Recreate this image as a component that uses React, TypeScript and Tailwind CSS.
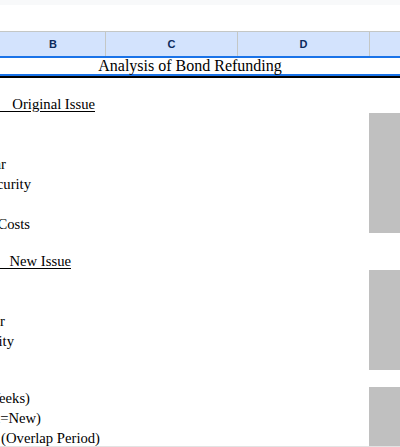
const serif = "font-['Liberation_Serif','Times_New_Roman',serif]";

type Row = {
  h: string;
  label?: string;
  end?: string;
  underline?: boolean;
  shaded?: boolean;
};

const rows: Row[] = [
  { h: "h-[15px]" },
  { h: "h-[20px]", label: "Data on\u00a0\u00a0\u00a0\u00a0Original Issue", end: "w-[95px]", underline: true },
  { h: "h-[20px]", shaded: true },
  { h: "h-[20px]", shaded: true },
  { h: "h-[20px]", label: "Coupon Payments per Year", end: "w-[6px]", shaded: true },
  { h: "h-[20px]", label: "Years Remaining on Security", end: "w-[31px]", shaded: true },
  { h: "h-[20px]", shaded: true },
  { h: "h-[20px]", label: "Flotation Costs", end: "w-[30px]", shaded: true },
  { h: "h-[17px]" },
  { h: "h-[20px]", label: "Data on\u00a0\u00a0\u00a0\u00a0New Issue", end: "w-[71px]", underline: true },
  { h: "h-[20px]", shaded: true },
  { h: "h-[20px]", shaded: true },
  { h: "h-[20px]", label: "Coupon Payments per Year", end: "w-[5px]", shaded: true },
  { h: "h-[20px]", label: "Years to Maturity", end: "w-[14px]", shaded: true },
  { h: "h-[20px]", shaded: true },
  { h: "h-[17px]" },
  { h: "h-[20px]", label: "Overlap Period (Weeks)", end: "w-[30px]", shaded: true },
  { h: "h-[20px]", label: "Tax Rate (Old=New)", end: "w-[41px]", shaded: true },
  { h: "h-[19px]", label: "Short-term Interest Rate (Overlap Period)", end: "w-[100px]", shaded: true },
];

function HeaderCell({ letter, w }: { letter: string; w: string }) {
  return (
    <div
      className={`${w} flex shrink-0 items-center justify-center border-r border-[#c4c7c5] text-[11px] font-bold text-[#0b2a5c] font-['Liberation_Sans',Arial,sans-serif]`}
    >
      {letter}
    </div>
  );
}

export default function App() {
  return (
    <div className="flex h-[447px] w-[400px] flex-col overflow-hidden bg-white">
      <div className="h-[5px] shrink-0 bg-[#f8f9fa]" />
      <div className="h-[26px] shrink-0 bg-white" />

      {/* column header */}
      <div className="flex h-[25px] shrink-0 border-t border-[#c4c7c5] bg-[#d3e3fd]">
        <HeaderCell letter="B" w="w-[106px] pl-[1px]" />
        <HeaderCell letter="C" w="w-[132px]" />
        <HeaderCell letter="D" w="w-[132px]" />
        <div className="flex-1" />
      </div>

      {/* title row */}
      <div className="flex h-[20px] shrink-0 flex-col border-y-2 border-[#1a73e8]">
        <div
          className={`${serif} flex h-full items-end justify-center pr-[20px] text-[16px] leading-[17px] text-black`}
        >
          Analysis of Bond Refunding
        </div>
      </div>
      <div className="h-[2px] shrink-0 bg-black" />

      <div className={`${serif} flex flex-col text-[14.67px] text-black`}>
        {rows.map((r, i) => (
          <div key={i} className={`flex ${r.h} shrink-0`}>
            <div className="flex w-[369px] shrink-0 items-center overflow-hidden pt-[2px]">
              {r.label && (
                <div className={`flex ${r.end} shrink-0 justify-end whitespace-nowrap`}>
                  <span className={r.underline ? "underline underline-offset-2" : ""}>
                    {r.label}
                  </span>
                </div>
              )}
            </div>
            <div className={`flex-1 ${r.shaded ? "bg-[#c0c0c0]" : ""}`} />
          </div>
        ))}
      </div>
      <div className="h-[1px] shrink-0 bg-[#e3e3e3]" />
    </div>
  );
}
